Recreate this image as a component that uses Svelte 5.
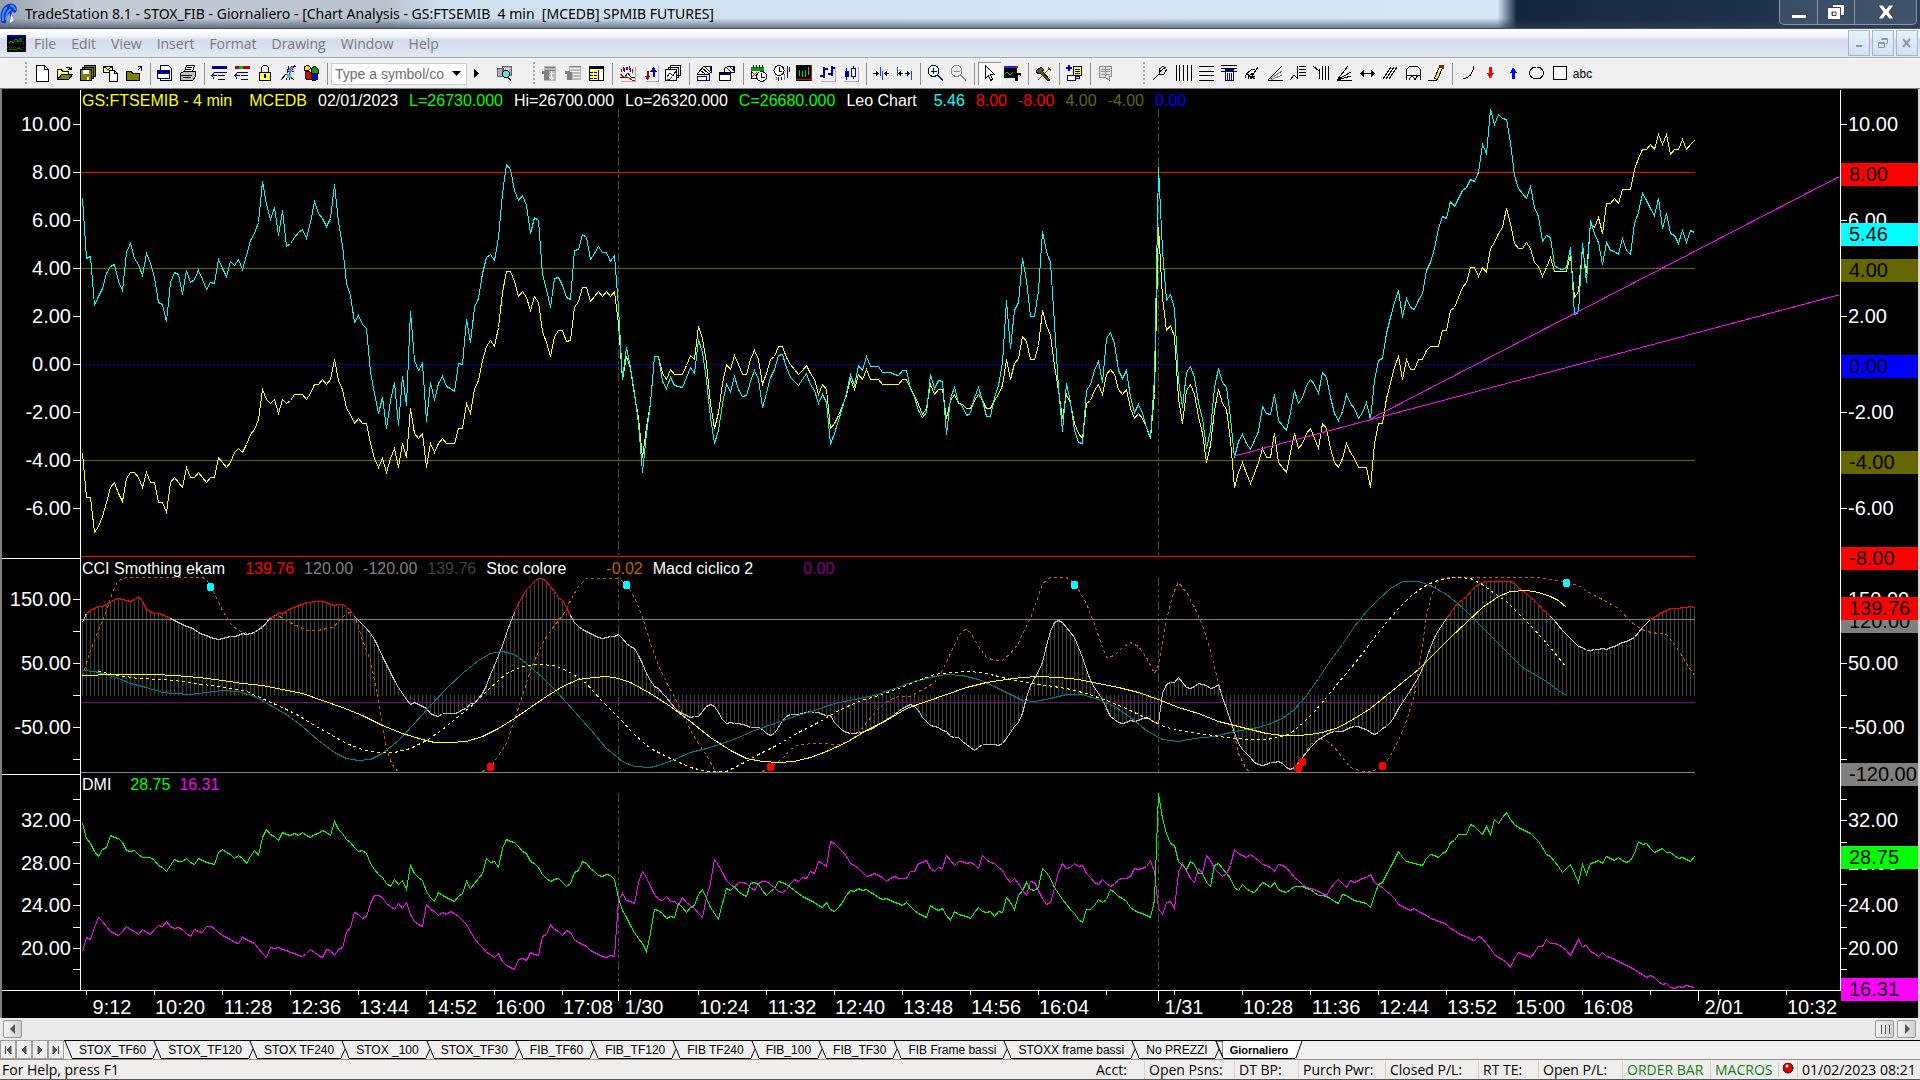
<script lang="ts">
  type Shape = [d: string, fill: string, stroke?: string];

  // one sample per 4 minute bar, stored as panel y
  const nums = (s: string) => s.trim().split(/\s+/).map(Number);

  const leo = nums(`
    108 168 166 215 206 198 183 176 174 191 200 162 153 168 174 185 163 173 187 212
    214 231 192 182 184 204 180 192 189 180 189 199 192 193 169 178 186 171 175 169
    179 165 150 143 132 91 114 129 117 145 120 156 153 147 142 139 148 132 111 123
    128 136 128 94 132 155 193 205 232 225 234 238 282 303 323 307 338 310 292 335
    286 315 221 270 280 273 331 292 310 293 286 296 298 301 273 274 229 252 217 208
    183 167 164 170 147 103 74 79 100 110 105 115 143 127 130 184 199 217 188 187
    195 207 209 160 159 144 147 169 163 156 162 162 171 165 217 289 257 277 303 333
    382 343 313 266 266 291 298 287 295 296 297 287 277 283 249 262 290 327 353 340
    313 294 301 286 299 306 305 291 280 289 317 303 287 279 265 264 277 287 291 295
    289 283 294 300 313 304 312 354 343 330 317 303 284 295 275 280 266 276 276 276
    282 282 282 284 285 280 280 298 307 320 327 322 284 298 290 291 344 308 297 312
    316 325 323 307 297 310 326 326 307 295 272 210 258 220 212 168 190 226 226 200
    141 161 172 233 297 341 293 312 340 352 353 300 294 280 271 292 248 242 253 280
    288 280 307 322 314 323 337 347 287 77 160 210 204 218 290 317 282 276 287 312
    328 358 340 297 278 292 297 327 367 351 344 353 359 350 341 316 323 324 304 330
    335 340 322 300 313 307 295 289 294 303 282 287 307 323 330 321 304 313 318 328
    322 312 329 290 270 268 243 227 212 200 227 208 217 219 210 203 180 172 158 138
    126 128 111 116 108 100 97 89 91 82 54 63 19 34 24 28 29 52 85 98
    103 108 96 117 126 151 145 147 175 178 179 177 157 224 222 153 192 130 143 152
    174 152 160 161 164 148 160 164 133 122 103 110 118 125 108 138 123 143 145 153
    140 152 140 142`);

  const price = nums(`
    363 407 407 442 436 426 412 397 392 403 411 388 382 382 387 397 382 392 392 412
    412 422 392 387 392 397 377 387 387 382 387 392 387 387 367 372 377 372 362 358
    362 354 344 339 329 299 309 313 309 323 309 313 310 304 304 304 309 303 294 294
    289 294 289 269 290 299 318 324 333 328 333 333 353 368 377 368 382 368 358 377
    353 367 318 343 348 343 377 353 362 353 348 353 353 353 338 338 313 323 299 290
    270 256 250 256 237 202 181 181 191 206 201 207 220 206 212 241 252 266 246 240
    240 251 250 217 211 197 197 211 206 201 206 201 206 201 233 289 266 278 305 327
    367 337 312 266 266 283 289 279 284 284 284 275 265 269 236 248 273 313 338 322
    293 274 279 265 274 284 284 269 260 269 294 283 269 266 256 256 267 274 279 284
    280 275 283 289 304 294 299 338 333 325 315 305 289 299 284 289 279 289 289 289
    294 294 294 294 294 289 289 298 305 314 324 318 294 304 299 299 328 310 304 313
    314 318 318 310 304 310 318 318 310 304 295 269 289 273 268 246 251 269 269 255
    220 235 245 275 300 328 304 313 333 343 348 313 310 300 294 304 284 279 284 299
    304 299 318 328 323 328 337 348 303 137 207 240 235 246 308 333 300 294 304 326
    343 372 355 320 299 313 319 350 397 382 372 383 393 383 372 358 367 367 343 372
    377 382 362 343 358 353 343 338 348 358 333 338 358 372 377 368 353 362 368 377
    377 377 397 353 333 333 308 293 277 266 289 269 279 279 269 269 260 256 256 256
    240 240 220 217 207 197 192 177 177 186 177 182 158 152 143 137 118 133 153 158
    158 152 158 172 176 186 177 167 181 181 181 181 165 207 201 158 182 133 137 127
    143 113 113 108 113 99 99 99 79 68 59 59 54 59 44 54 44 64 59 59
    49 59 54 50`);

  const dmiPlus = nums(`
    273 288 293 301 306 299 297 285 287 288 292 300 301 300 304 307 307 307 310 315
    317 321 315 309 311 311 308 312 314 308 310 312 313 314 302 299 302 304 308 305
    308 313 306 300 305 287 279 284 286 290 282 284 285 283 285 282 285 287 284 283
    280 282 285 271 279 283 289 292 297 301 300 303 313 319 324 327 333 336 329 334
    330 339 315 323 327 330 341 347 351 342 345 347 349 351 346 343 331 338 333 328
    323 308 312 311 317 298 289 291 292 296 301 303 311 313 317 324 328 331 329 328
    332 336 333 322 320 311 313 318 321 325 326 324 325 329 348 360 367 375 382 388
    393 401 383 359 360 363 368 366 367 353 357 362 357 355 344 339 348 357 363 369
    353 338 340 336 341 344 346 333 332 334 340 345 341 338 331 332 334 337 340 343
    346 348 350 352 355 357 352 359 361 357 352 345 340 341 338 340 339 342 344 347
    349 348 350 352 353 355 352 356 360 363 365 367 355 358 360 358 365 370 361 364
    365 366 368 362 357 361 362 361 366 361 362 347 352 359 345 340 332 339 340 337
    318 322 328 337 343 349 354 359 363 369 372 359 359 355 349 352 349 339 342 346
    348 351 357 360 362 363 365 367 350 243 268 283 293 295 311 315 319 311 314 323
    323 332 336 315 313 318 323 328 337 340 334 338 341 342 337 332 334 337 332 339
    341 342 339 336 336 336 338 339 342 345 345 346 348 351 353 344 345 348 350 351
    352 353 357 345 334 332 324 317 309 301 307 311 312 313 314 315 308 304 305 307
    303 301 292 290 284 284 284 274 276 280 284 276 284 269 273 267 262 269 274 277
    279 281 283 287 291 297 304 306 311 316 322 318 314 323 332 314 324 313 312 310
    313 306 308 310 307 310 312 310 303 291 294 293 298 302 300 298 302 302 305 308
    307 309 311 306`);

  const dmiMinus = nums(`
    401 387 389 377 367 371 376 381 383 385 381 376 379 381 384 379 382 384 379 375
    376 371 376 378 377 379 383 386 379 381 382 376 376 378 382 385 387 389 392 393
    387 389 391 393 398 403 407 397 398 397 399 400 402 403 405 406 403 399 402 405
    407 399 400 405 399 397 382 377 362 364 368 366 353 345 345 347 353 356 359 353
    358 352 364 371 374 376 354 359 361 365 362 364 361 363 366 370 374 381 388 393
    397 402 404 407 403 411 415 417 419 409 408 410 402 404 405 386 384 374 379 381
    385 380 382 389 392 394 396 400 402 404 406 407 405 406 350 343 350 351 353 332
    321 327 336 344 349 350 346 351 351 355 347 352 355 358 363 367 347 333 309 315
    322 330 334 337 332 332 333 337 340 333 331 331 334 337 341 342 339 333 329 331
    327 328 321 323 311 313 316 291 293 297 301 306 313 315 318 322 326 325 323 325
    327 331 328 326 328 328 328 321 321 313 312 310 318 321 317 318 305 310 315 311
    311 313 312 314 318 305 309 312 313 317 320 327 332 328 333 340 345 331 332 340
    348 354 352 338 322 313 318 317 313 316 315 323 327 332 334 329 333 336 334 329
    328 328 326 318 319 318 316 310 321 358 364 352 351 358 322 313 320 328 332 318
    323 305 310 318 322 326 323 315 299 303 305 307 304 307 310 314 315 317 321 314
    315 317 322 327 330 334 337 338 339 341 343 345 338 333 329 333 337 330 332 330
    328 327 324 332 335 337 341 344 348 354 356 358 360 358 361 363 365 368 369 371
    372 374 378 380 383 385 386 389 390 386 388 393 398 404 407 409 412 417 408 402
    404 405 407 402 396 396 389 393 393 394 397 400 405 397 389 396 395 401 403 406
    402 406 407 409 411 413 415 417 419 422 424 427 425 427 431 434 433 437 438 436
    437 435 436 437`);

  const cci = nums(`
    72 63 60 58 56 56 54 52 49 48 49 50 51 49 46 51 59 61 63 63
    64 66 68 70 72 74 76 77 79 82 84 85 87 88 89 88 87 86 86 85
    83 84 83 82 79 77 72 67 66 62 63 61 58 57 55 54 52 52 51 51
    51 52 54 55 54 54 57 60 66 70 74 78 83 89 97 106 114 122 130 137
    143 149 154 152 154 156 158 163 165 166 163 163 163 163 162 159 158 153 153 148
    143 135 124 115 105 95 83 72 62 53 46 39 35 31 28 28 31 36 41 47
    50 57 65 72 76 79 81 83 85 87 88 87 86 86 84 88 93 96 98 105
    113 123 130 136 138 143 147 152 157 161 163 165 167 166 166 161 156 154 156 162
    169 173 172 173 173 174 175 177 177 177 179 183 185 183 177 170 166 164 164 164
    163 162 161 162 162 164 165 165 172 176 180 182 183 183 182 182 180 179 177 174
    172 169 167 164 161 158 156 154 156 160 167 171 175 176 177 180 181 186 187 187
    191 194 197 200 197 194 194 194 194 195 193 188 182 176 172 163 147 135 128 121
    112 95 81 72 70 72 77 82 87 97 107 119 130 137 143 149 158 166 169 172
    173 172 170 171 170 168 167 169 172 173 143 134 132 132 127 132 137 138 136 133
    134 135 138 137 134 147 158 170 182 193 199 203 207 212 214 215 214 212 212 211
    213 217 219 217 212 207 202 197 193 189 187 184 182 181 181 181 179 177 176 176
    178 179 182 184 182 178 176 172 166 158 152 146 140 133 127 118 108 97 87 80
    74 68 63 57 52 49 46 41 37 34 32 31 31 31 31 31 31 31 33 37
    40 43 47 50 54 59 62 66 70 75 80 84 88 92 96 97 100 100 99 99
    98 99 97 96 94 92 91 89 87 82 77 73 69 67 64 62 60 58 58 58
    57 57 56 57`);

  // smoothed curves as bar,y knots
  const macdSlow = `0,125 8,124 18,124 23,125 29,127 35,130 40,133 45,135 50,139 55,143 60,150 65,157 70,165 75,175
    80,183 85,189 88,192 92,192 96,191 100,186 104,178 108,168 112,157 116,146 120,136 124,129 128,127 131,126 134,128
    137,132 142,143 147,156 152,171 157,187 162,200 166,208 170,211 174,212 178,211 182,207 186,201 191,192 196,180
    201,170 206,158 211,151 216,144 221,137 226,132 231,129 235,127 239,126 244,127 249,129 254,133 259,137 264,142
    269,149 274,157 279,163 284,171 289,176 293,180 296,183 300,185 304,185 307,184 310,182 314,177 318,168 322,158
    326,145 330,132 334,119 338,103 342,87 346,72 350,57 354,46 357,41 361,40 364,42 367,46 369,50 371,57`;

  const macdFast = `0,120 3,121 6,124 9,128 12,133 16,137 20,142 23,143 27,144 31,142 35,140 39,141 43,146 47,155 51,164
    55,176 59,190 63,202 66,208 69,210 72,209 75,203 79,190 83,173 87,155 91,138 95,123 99,110 102,103 105,101 108,104
    111,113 115,127 119,143 123,161 127,179 131,198 135,211 138,216 142,217 144,215 148,209 152,202 156,198 160,193
    164,187 168,180 173,173 178,166 183,160 188,153 193,149 198,145 203,138 208,131 213,126 216,124 220,125 224,129
    228,136 232,144 235,150 238,151 242,148 246,144 250,144 254,149 258,156 262,167 266,180 270,189 274,191 278,188
    283,186 287,182 291,179 294,177 297,173 300,168 303,159 306,145 309,128 312,110 315,94 318,76 321,61 324,49 327,38
    330,31 334,31 337,35 341,44 345,57 349,73 353,89 357,105 360,117 363,124 366,131 369,140 371,145`;

  const macdSignal = `4,121 9,125 14,128 20,129 25,131 30,134 36,137 41,141 46,150 50,157 54,165 58,175 62,184 66,193
    70,199 74,202 78,202 82,198 86,190 90,179 94,166 98,153 102,137 106,123 110,116 114,114 118,115 122,122 126,133
    130,151 134,167 138,184 142,198 147,208 152,217 156,221 161,221 165,213 169,204 174,194 179,182 184,172 189,160
    194,151 199,145 204,138 209,130 213,124 217,122 222,121 226,123 231,128 236,132 241,135 246,138 251,143 256,150
    261,158 266,168 271,177 276,181 281,184 286,187 291,189 296,189 299,187 302,183 305,173 308,161 311,147 314,132
    317,118 320,103 323,87 326,72 329,58 332,46 335,37 338,31 341,28 344,27 347,28 350,34 353,43 356,51 359,63 362,75
    365,88 368,102 371,117`;

  const stoc = [
    `0,125 2,100 4,80 6,60 7,48 8,37 9,30 11,27 30,27 31,29 33,43 35,60 37,73 39,80 42,84 44,79 46,72 48,65 50,67 52,72
    54,76 56,80 59,80 61,78 63,76 64,71 66,63 67,62 68,66 69,76 70,90 72,110 73,130 74,150 75,175 76,197 77,210 78,218 79,221`,
    `100,221 102,217 104,205 106,193 108,169 110,145 112,120 114,101 116,86 118,75 120,65 122,50 124,36 126,28 134,28
    136,34 138,47 140,67 142,93 144,115 146,132 148,146 150,163 152,180 154,193 156,205 158,219 159,221`,
    `170,221 172,217 175,208 177,199 179,194 184,193 189,194 192,190 194,183 196,172 199,158 202,149 204,146 207,146
    209,141 211,137 213,132 215,120 217,103 219,86 220,80 221,79 222,82 224,96 226,107 228,110 230,110 232,103 234,93
    235,83 237,68 239,45 240,34 241,29 242,27 246,27 247,29 249,39 251,53 253,74 255,97 256,107 258,105 260,97 262,92
    264,96 266,107 268,123 269,115 270,92 271,70 272,53 273,40 274,32 276,42 278,57 280,75 282,100 284,133 286,158
    288,185 289,203 291,219 292,221`,
    `303,220 304,213 306,200 307,194 309,189 311,190 313,197 315,207 317,217 320,221 322,221 325,217 327,205 329,190
    331,170 333,145 334,120 335,95 336,65 337,48 338,38 339,31 340,28 341,27 364,27 367,29 370,31 374,35 377,43 380,49
    384,58 387,71 389,77 391,81 394,83 396,84 398,94 400,106 402,119 403,125`
  ];

  const PLOT_W = 1759;
  const bx = (bar: number) => bar * 4 + 1.5;
  const LAST = bx(403);
  const line = (ys: number[]) => ys.map((y, i) => `${bx(i)},${y + 0.5}`).join(' ');
  const knots = (s: string) =>
    s.trim().split(/\s+/).map((p) => {
      const [b, y] = p.split(',').map(Number);
      return `${bx(b)},${y + 0.5}`;
    }).join(' ');

  const OVERBOUGHT = 69;
  const cciPath = (hot: boolean) =>
    cci.slice(1).map((y, i) => {
      const isHot = y < OVERBOUGHT && cci[i] < OVERBOUGHT + 3;
      return isHot === hot ? `M${bx(i)} ${cci[i] + 0.5}L${bx(i + 1)} ${y + 0.5}` : '';
    }).join('');
  const cciBars = cci.map((y, i) => `M${bx(i)} ${y > 145 ? 145 : 146}V${y}`).join('');

  const dots: [number, number, string][] = [
    [32, 37, '#0ff'], [136, 35, '#0ff'], [248, 35, '#0ff'], [371, 33, '#0ff'],
    [102, 217, '#f00'], [172, 217, '#f00'], [304, 218, '#f00'], [305, 212, '#f00'], [325, 216, '#f00']
  ];

  const ticks: [number, string][] = [
    [34, '10.00'], [82, '8.00'], [130, '6.00'], [178, '4.00'], [226, '2.00'], [274, '0.00'],
    [322, '-2.00'], [370, '-4.00'], [418, '-6.00'],
    [509, '150.00'], [541, ''], [573, '50.00'], [605, ''], [637, '-50.00'], [669, ''],
    [709, ''], [730, '32.00'], [752, ''], [773, '28.00'], [794, ''], [815, '24.00'], [837, ''], [858, '20.00'], [879, '']
  ];

  const tags: [number, string, string][] = [
    [73, '8.00', '#f00'], [133, '5.46', '#0ff'], [169, '4.00', '#660'], [265, '0.00', '#00f'],
    [361, '-4.00', '#660'], [457, '-8.00', '#f00'], [520, '120.00', '#808080'], [507, '139.76', '#f00'],
    [673, '-120.00', '#808080'], [756, '28.75', '#0f0'], [888, '16.31', '#f0f']
  ];

  const pct = (x: number) => `${(x / PLOT_W) * 100}%`;
  const times: [number, string, boolean?][] = [
    [5, '9:12'], [73, '10:20'], [141, '11:28'], [209, '12:36'], [277, '13:44'], [345, '14:52'], [413, '16:00'],
    [481, '17:08'], [537, '1/30', true], [549, ''], [617, '10:24'], [685, '11:32'], [753, '12:40'], [821, '13:48'],
    [889, '14:56'], [957, '16:04'], [1025, ''], [1077, '1/31', true], [1093, ''], [1161, '10:28'], [1229, '11:36'],
    [1297, '12:44'], [1365, '13:52'], [1433, '15:00'], [1501, '16:08'], [1569, ''], [1617, '2/01', true], [1637, ''],
    [1705, '10:32']
  ];

  const K = '#000';
  const N = '#000080';
  const G = '#808080';
  const icons: Record<string, Shape[]> = {
    'New': [['M2.500.5h8l4 4v12h-12z', '#fff', K], ['M10.500 .5v4h4', 'none', K]],
    'Open': [['M.5 14.500v-10h4l1 2h6v3', '#ffff80', K], ['M.5 14.500l4-5h11l-4 5z', '#808000', K], ['M9 2.500h3l2 2m0-3v3h-3', 'none', K]],
    'Save all': [['M4.500.5h11v11h-11zM2.500 2.500h11v11h-11z', '#808000', K], ['M.5 4.500h11v11H.5z', '#808000', K], ['M3 5h6v4H3zM7 12h2v3H7z', '#fff']],
    'Send': [['M.5 1.500h9v6h-9z', '#ffff80', K], ['M.5 1.500l4.500 3 4.500-3', 'none', K], ['M6.500 5.500h5l3 3v8h-8z', '#fff', K], ['M11.500 5.500v3h3', 'none', K]],
    'Close folder': [['M.5 15.500v-9h5l1 2h7v7z', '#808000', K], ['M12 1.500h3.500v4M15.500 1.500l-4 4', 'none', N]],
    'Window': [['M3.500.5h8l3 3v12h-11z', '#fff', K], ['M.5 5.500h12v8H.5z', '#fff', N], ['M1 6h12v3H1z', N]],
    'Print': [['M4.500 6.500l2-6h8l-2 6z', '#fff', K], ['M.5 8.500l3-2h12v5l-3 4H.5z', '#c0c0c0', K], ['M7 2.500h5M6 4.500h5M1 10.500h11M3 12.500h8', 'none', K]],
    'Study': [['M1 1h15v3H1z', N], ['M6.500 7.500h9m-9 3h7m-7 4h7', 'none', K], ['M14 7.500H5Q2 7.500 2 10.500h4m-3-2l-2 2 2 3', 'none', N]],
    'Strategy': [['M1 1h15v3H1z', '#c00000'], ['M5 1h4v3H5z', '#00c000'], ['M6.500 10.500h7m-7 4h7', 'none', K], ['M14 7.500H5Q2 7.500 2 10.500h4m-3-2l-2 2 2 3', 'none', N]],
    'Lock': [['M4.500 7v-3q0-3.500 3.500-3.500t3.500 3.500v3', 'none', K], ['M2.500 7.500h11v8h-11z', '#ffff60', K], ['M7 9h2v4H7z', K]],
    'Satellite': [['M7 8l2-7m0 8l6-9M8 6l6 1M11 2l5-1', 'none', N], ['M9 3l4-2-1 6-3 1z', '#8080c0'], ['M1 15l5-6 2 2-2 4M10 15l-1-4 5 4', 'none', K], ['M7 9h4v4H7z', '#40c0c0']],
    'Blocks': [['M1 2l4-2 3 3-3 3-4-1z', '#ffe000', K], ['M8 4l4-3 3 3v4H9z', '#00a000', K], ['M2 7l4-1 3 3v5l-4 1-3-2z', '#e00000', K], ['M9 8h5l1 6-4 2-3-2z', '#0000c0', K]],
    'Look up': [['M1 3h6v8H1zM6 1h9v9H6z', '#b0b0b8', '#606070'], ['M8 3v4m2-4v4m2-4v4', 'none', '#fff'], ['M10 5.500a3.500 3.500 0 1 0 .1 0zM12 12l3 4', '#60e0e0', K]],
    'Off chart': [['M2 1h12v15H2z', '#b8b8b8'], ['M0 6h7v9H2V9H0z', G], ['M3 2.500h10M3 5.500h10', 'none', G], ['M9.500 6v8m-2-2l2 2 2-2m-4-4h4', 'none', '#fff']],
    'Off table': [['M4 1h12v14H4z', '#b8b8b8'], ['M0 6h7v9H2V9H0z', G], ['M5 3.500h10M5 6.500h10M8 9.500h7M8 12.500h7', 'none', '#fff'], ['M4 1.500h12', 'none', G]],
    'Table': [['M1.500 1.500h14v14h-14z', '#fff', K], ['M1 1h15v3H1z', K], ['M2 5h8v10H2z', '#ffff60'], ['M2 7.500h3m1 0h3m-7 3h3m1 0h3m-7 3h3m1 0h3M10.500 5v10', 'none', K]],
    'Studies': [['M16.500 2v14.500H2', 'none', '#b0b0b0'], ['M2.500 4v3m2-5v4m3-4v3m3-4v4m3-1v4', 'none', '#d00000'], ['M5.500 3v4m3-5v3m3-2v4', 'none', '#0000c0'], ['M1 13l5-1 3-4 3 4 4 1', 'none', K], ['M1 9l4 3 4 0 4 3 3 1', 'none', '#d00000']],
    'Arrows': [['M16.500 1v15H4', 'none', '#b0b0b0'], ['M5 6h1v5h2l-2.500 3L3 11h2z', '#a00000', '#a00000'], ['M11 11h1V6h2l-2.500-3L9 6h2z', '#0000a0', '#0000a0']],
    'Charts': [['M5.500.5h10v10h-10zM3.500 2.500h10v10h-10z', '#fff', K], ['M.5 4.500h11v11H.5z', '#fff', K], ['M2 12l3-4 3 3 3-5', 'none', '#0000c0'], ['M2 14h3l2-2', 'none', '#c00000']],
    'Format a': [['M1.500 8.500l6-7h8v6l-5 2h-9z', '#fff', K], ['M4 5l5 4M6 3l6 5M8 1l6 6', 'none', K], ['M14 1h2v5h-2z', N], ['M1.500 11.500h9v4h-9zM8.500 9.500h5v6h-3', '#fff', N]],
    'Format b': [['M5.500 7.500v-4l3-2h7v6h-5z', '#fff', K], ['M8 3l4 4M10 1l5 5', 'none', K], ['M14 1h2v4h-2z', N], ['M.5 7.500h11v8H.5z', '#fff', K], ['M1 8h10v2H1z', N]],
    'Calendar': [['M1.500 2.500h12v11h-12z', '#fff', K], ['M1 2h13v4H1z', '#00a000'], ['M3.500 0v3m3-3v3m3-3v3m3-3v3', 'none', K], ['M2 7l5 5m0-5l-5 5', 'none', '#e00000'], ['M11.500 6.500a5 5 0 1 0 .1 0z', '#fff', K], ['M11.500 8v4h3', 'none', K]],
    'Clock bars': [['M6 .5a5 5 0 1 0 .1 0z', '#fff', K], ['M6 2v4l3 1', 'none', K], ['M5.500 12v4m3-4v3m6-14v12m2-11v5', 'none', '#0000a0'], ['M3.500 12v3m8-6v6', 'none', G]],
    'Black chart': [['M0 0h16v16H0z', K], ['M3.500 5v6m3-5v6m3-7v7m3-10v8', 'none', '#00e000'], ['M0 14.500h16M15.500 0v16', 'none', '#e00000']],
    'Bar type': [['M16.500 2v14.500H2', 'none', '#b0b0b0'], ['M4 2h2v11H4zM1 10h3v2H1zM6 3h3v2H6zM12 1h2v10h-2zM9 8h3v2H9zM14 2h2v2h-2z', '#0000a0']],
    'Candles': [['M16.500 2v14.500H2', 'none', '#b0b0b0'], ['M4.500 3v12M11.500 1v13', 'none', '#0000a0'], ['M3 6h4v6H3z', '#0000a0'], ['M9.500 3.500h4v8h-4z', '#fff', '#0000a0']],
    'Squeeze': [['M0 8.500h5m-2-2l2 2-2 2M16 8.500h-4m2-2l-2 2 2 2', 'none', K], ['M7.500 2v9M9.500 6v9', 'none', '#2040ff']],
    'Widen': [['M3 8.500h4m-2-2l-2 2 2 2M13 8.500H9m2-2l2 2-2 2', 'none', K], ['M1.500 2v9M15.500 6v9', 'none', '#2040ff']],
    'Zoom in': [['M10 10l6 6M11 10l5 5', 'none', N], ['M6.500 .5a5.500 5.500 0 1 0 .1 0z', '#d8ffff', K], ['M6 3h1v6H6zM3.500 5.500h6v1h-6z', K]],
    'Zoom out': [['M10 10l6 6M11 10l5 5', 'none', '#909090'], ['M6.500 .5a5.500 5.500 0 1 0 .1 0z', '#eee', '#909090'], ['M3.500 6.500h6', 'none', '#909090']],
    'Pointer': [['M4.500.5v13l3-3 2 5 2-1-2-5h4z', '#fff', K]],
    'Text on chart': [['M0 1h13v12H0z', K], ['M0 1h12v2H0z', '#2020ff'], ['M11 1h3v2h-3z', '#e00000'], ['M1 9l2-2 3 3 3-3', 'none', '#00e000'], ['M8 8h9v3h-1v-1h-2v6h-3v-6H9v1H8z', K]],
    'Tools': [['M3 15L14 4M13 2l3 4', 'none', '#806000'], ['M1 6l5-4 3 3-2 1 8 9-2 1-8-8-2 1z', '#606000', K]],
    'Add sheet': [['M2 0h2v2h2v2H4v2H2V4H0V2h2z', '#0000d0'], ['M7.500 1.500h8v9h-8z', '#ffff60', K], ['M9 4.500h5M9 6.500h5M9 8.500h5', 'none', K], ['M1.500 10.500h8v5h-8zM9.500 11.500h4v2h-4', '#fff', N]],
    'Note': [['M2.500 1.500h12v10h-2v4l-4-3h-6z', '#e0e0e0', '#909090'], ['M4 4.500h9M4 6.500h9M4 9.500h9M8.500 2v10', 'none', '#909090']],
    'Pitchfork': [['M1 15L7 9V4l5-3M7 9h5l3-5M7 7l7-5', 'none', K]],
    'Time zones': [['M1.500 0v16M4.500 0v16M8.500 0v16M12.500 0v16M16.500 0v16', 'none', K]],
    'Levels': [['M1 1.500h15M1 6.500h15M1 10.500h15M1 15.500h15', 'none', K]],
    'Calculator': [['M0 .5h16M0 3.500h16M0 6.500h16', 'none', K], ['M4.500 4.500h8v11h-8z', '#fff', '#0000a0'], ['M5 5h7v2H5z', '#0000a0'], ['M6.500 8v7m2-7v7m2-7v7', 'none', '#0000a0']],
    'Arcs': [['M1 13q2-8 10-9M4 14q1-5 6-6M7 14q1-3 4-3M3 9l8 5M14 2L6 14', 'none', K]],
    'Fan': [['M1 15.500h15M1 15L15 1', 'none', K], ['M3 14L15 6M4 15L15 10', 'none', G]],
    'Retrace': [['M0 15l4-5 3 3V1', 'none', K], ['M9 1.500h7M9 4.500h7M9 7.500h7M9 10.500h7', 'none', K]],
    'Extensions': [['M0 1l6 5M6.500 4v10M9.500 1v14M12.500 1v14M15.500 1v14', 'none', K]],
    'Speed lines': [['M1 15.500h15M1 15L12 1M1 15L15 7M1 15L15 11', 'none', K]],
    'Horizontal': [['M2 8h13', 'none', K], ['M5 4v9L1 8.500zM12 4v9l4-4.500z', K]],
    'Parallel': [['M1 14L9 2M4 14L12 2M7 14L15 2', 'none', K]],
    'Cycle': [['M1.500 15V7q0-6 7-6t7 6v8M1 11l3-1 3 1 3-1 3 1 3-1M4 15l3-5 3 5 3-5', 'none', K]],
    'Highlight': [['M6.500 13.500L11.500 1.500l3 1-5 12z', '#ffff40', K], ['M11 0h5v4l-4-1z', '#802020'], ['M0 15.500h9', 'none', K]],
    'Curve': [['M15 1q-2 12-11 13', 'none', K]],
    'Down arrow': [['M7 2h3v6h2l-4 6-3-6h2z', '#f00']],
    'Up arrow': [['M7 14h3V8h2L8 2 5 8h2z', '#00f']],
    'Ellipse': [['M8.500 2a7 6 0 1 0 .1 0z', 'none', K]],
    'Rectangle': [['M2.500 1.500h13v13h-13z', '#fff', K]]
  };

  const fileTools = ['New', 'Open', 'Save all', 'Send', 'Close folder', '|', 'Window', 'Print', '|', 'Study', 'Strategy', 'Lock', 'Satellite', 'Blocks', '|'];
  const chartTools = [
    'Off chart', 'Off table', 'Table', '|', 'Studies', 'Arrows', 'Charts', '|', 'Format a', 'Format b', '|',
    'Calendar', 'Clock bars', 'Black chart', 'Bar type', 'Candles', '|', 'Squeeze', 'Widen', '|', 'Zoom in', 'Zoom out', '|',
    'Pointer', 'Text on chart', '|', 'Tools', '|', 'Add sheet', '|', 'Note'
  ];
  const drawTools = [
    'Pitchfork', 'Time zones', 'Levels', 'Calculator', 'Arcs', 'Fan', 'Retrace', 'Extensions', 'Speed lines', 'Horizontal',
    'Parallel', 'Cycle', 'Highlight', '|', 'Curve', 'Down arrow', 'Up arrow', 'Ellipse', 'Rectangle'
  ];

  const menus = ['File', 'Edit', 'View', 'Insert', 'Format', 'Drawing', 'Window', 'Help'];
  const sheets = [
    'STOX_TF60', 'STOX_TF120', 'STOX TF240', 'STOX _100', 'STOX_TF30', 'FIB_TF60', 'FIB_TF120', 'FIB TF240',
    'FIB_100', 'FIB_TF30', 'FIB Frame bassi', 'STOXX frame bassi', 'No PREZZI', 'Giornaliero'
  ];
  let active = $state('Giornaliero');
  let symbol = $state('');
</script>

{#snippet icon(name: string)}
  <svg class="icon" width="17" height="17" viewBox="0 0 17 17" aria-hidden="true">
    {#each icons[name] as [d, fill, stroke]}
      <path {d} {fill} stroke={stroke ?? 'none'} />
    {/each}
  </svg>
{/snippet}

{#snippet tools(list: string[])}
  {#each list as name}
    {#if name === '|'}
      <span class="sep"></span>
    {:else}
      <button class="tool" class:pressed={name === 'Pointer'} title={name} aria-label={name}>{@render icon(name)}</button>
    {/if}
  {/each}
{/snippet}

<div class="app">
  <header class="titlebar">
    <svg class="logo" width="18" height="22" viewBox="0 0 18 22" aria-hidden="true">
      <path d="M1 19Q-1 7 6 2q5-3 9 0 3 3 1 7-2 2-4-1-1 3 1 5v6q-4-2-3-9-4 3-4 10-2 1-5-1z" fill="#1030d8" />
      <path d="M3 18Q2 8 7 4M6 17q0-8 5-11M10 3q4-1 5 4" fill="none" stroke="#30a0ff" stroke-width="2" />
      <path d="M11 11q3 3 2 7l-3 2z" fill="#fff" />
    </svg>
    <h1>TradeStation 8.1 - STOX_FIB - Giornaliero - [Chart Analysis - GS:FTSEMIB&nbsp; 4 min&nbsp; [MCEDB] SPMIB FUTURES]</h1>
    <div class="winbtns">
      <button aria-label="Minimize"><svg width="18" height="18" viewBox="0 0 18 18"><path d="M1.500 11.500h15v4h-15z" fill="#fff" stroke="#445" /></svg></button>
      <button aria-label="Restore"><svg width="20" height="18" viewBox="0 0 20 18"><path d="M6.500 1.500h12v11h-12z" fill="#fff" stroke="#445" /><path d="M1.500 4.500h13v12h-13zM6 9v3.500h4V9z" fill="#fff" stroke="#445" fill-rule="evenodd" /></svg></button>
      <button class="close" aria-label="Close"><svg width="18" height="16" viewBox="0 0 18 16"><path d="M1 1h5l3 4 3-4h5l-5 7 5 7h-5l-3-4-3 4H1l5-7z" fill="#fff" stroke="#445" /></svg></button>
    </div>
  </header>

  <nav class="menubar">
    <svg class="doc" width="19" height="17" viewBox="0 0 19 17" aria-hidden="true">
      <path d="M0 0h19v17H0z" fill="#000" />
      <path d="M0 0h19v2H0z" fill="#0000c0" />
      <path d="M2 9l2-3 2 2 3-4 2 3 3-4v4" fill="none" stroke="#00c000" />
      <path d="M0 12.500h19M16.500 2v15" stroke="#a00000" stroke-dasharray="1 1" />
      <path d="M2 15l3-1 3 1 4-2 3 2" fill="none" stroke="#00a000" />
    </svg>
    {#each menus as m}
      <button>{m}</button>
    {/each}
    <div class="mdi">
      <button aria-label="Minimize chart"><svg width="12" height="12" viewBox="0 0 12 12"><path d="M3 8h6v2H3z" fill="#8a9ab0" /></svg></button>
      <button aria-label="Restore chart"><svg width="12" height="12" viewBox="0 0 12 12"><path d="M4.500 1.500h6v5h-2M1.500 5.500h6v5h-6zM4 2.500h7M1 6.500h7" fill="none" stroke="#8a9ab0" /></svg></button>
      <button aria-label="Close chart"><svg width="12" height="12" viewBox="0 0 12 12"><path d="M2 2l7 8M9 2l-7 8" fill="none" stroke="#8a9ab0" stroke-width="2" /></svg></button>
    </div>
  </nav>

  <div class="toolbar">
    <div class="group first">
      <span class="grip"></span>
      {@render tools(fileTools)}
      <div class="combo">
        <input type="text" aria-label="Symbol" placeholder="Type a symbol/co" bind:value={symbol} />
        <button aria-label="Recent symbols"><svg width="9" height="5" viewBox="0 0 9 5"><path d="M0 0h9L4.500 5z" /></svg></button>
      </div>
      <button class="go" aria-label="Go"><svg width="5" height="9" viewBox="0 0 5 9"><path d="M0 0l5 4.500L0 9z" /></svg></button>
      <button class="tool lookup" aria-label="Look up">{@render icon('Look up')}</button>
    </div>
    <div class="group second">
      <span class="grip"></span>
      {@render tools(chartTools)}
    </div>
    <div class="group third">
      <span class="grip"></span>
      {@render tools(drawTools)}
      <button class="tool abc">abc</button>
    </div>
  </div>

  <main class="chart">
    <svg class="axis left" width="79" height="901" aria-hidden="true">
      {#each ticks as [y, label]}
        <path d="M71 {y}.5h8" stroke="#fff" />
        {#if label}<text x="69" y={y + 7} text-anchor="end">{label}</text>{/if}
      {/each}
      <path d="M0 468.500h79M0 684.500h79M0 900.500h79M78.500 0v901" stroke="#fff" />
    </svg>

    <div class="plots">
      <svg class="plot" viewBox="0 0 {PLOT_W} 901" preserveAspectRatio="none" role="img" aria-label="GS:FTSEMIB 4 minute chart">
        <g fill="none">
          <path d="M0 82.500H{LAST}M0 466.500H{LAST}" stroke="#f00" />
          <path d="M0 178.500H{LAST}M0 370.500H{LAST}" stroke="#660" />
          <path d="M0 274.500H{LAST}" stroke="#00f" stroke-dasharray="2 2" />
          {#each [bx(134), bx(269)] as x}
            <path d="M{x} 19V465M{x} 487V682M{x} 703V897" stroke="#484848" stroke-dasharray="9 3 3 3 3 3" />
          {/each}
          <polyline points={line(price)} stroke="#ff0" />
          <polyline points={line(leo)} stroke="#0ff" />
          <path d="M{bx(322)} 329L{bx(439)} 87M{bx(288)} 366L{bx(439)} 205" stroke="#f0f" />
        </g>
        <g fill="none" transform="translate(0 460)">
          <path d={cciBars} stroke="#404040" />
          <path d="M0 69.500H{LAST}M0 222.500H{LAST}" stroke="#808080" />
          <path d="M0 152.500H{LAST}" stroke="#800080" />
          {#each stoc as s}
            <polyline points={knots(s)} stroke="#c06000" stroke-dasharray="3 3" />
          {/each}
          <path d={cciPath(false)} stroke="#c0c0c0" />
          <path d={cciPath(true)} stroke="#f00" />
          <polyline points={knots(macdFast)} stroke="#008080" />
          <polyline points={knots(macdSignal)} stroke="#ff0" stroke-dasharray="3 3" />
          <polyline points={knots(macdSlow)} stroke="#ff0" />
          {#each dots as [b, y, color]}
            <circle cx={bx(b)} cy={y} r="4" fill={color} />
          {/each}
          <polyline points={line(dmiMinus)} stroke="#f0f" />
          <polyline points={line(dmiPlus)} stroke="#0f0" />
        </g>
        <path d="M0 900.500H{PLOT_W}" stroke="#fff" />
      </svg>

      <div class="legend price">
        <span class="yellow">GS:FTSEMIB - 4 min</span><span class="yellow near">MCEDB</span><span>02/01/2023</span>
        <span class="lime">L=26730.000</span><span>Hi=26700.000</span><span>Lo=26320.000</span>
        <span class="lime">C=26680.000</span><span>Leo Chart</span><span class="cyan near">5.46</span>
        <span class="red">8.00</span><span class="red">-8.00</span><span class="olive">4.00</span>
        <span class="olive">-4.00</span><span class="blue">0.00</span>
      </div>
      <div class="legend cci">
        <span>CCI Smothing ekam</span><span class="red apart">139.76</span><span class="gray">120.00</span>
        <span class="gray">-120.00</span><span class="dim">139.76</span><span>Stoc colore</span>
        <span class="orange far">-0.02</span><span>Macd ciclico 2</span><span class="purple farther">0.00</span>
      </div>
      <div class="legend dmi">
        <span>DMI</span><span class="lime apart">28.75</span><span class="magenta">16.31</span>
      </div>
    </div>

    <svg class="axis right" width="78" height="928" aria-hidden="true">
      <path d="M.5 0v901" stroke="#fff" />
      {#each ticks as [y, label]}
        <path d="M0 {y}.5h7" stroke="#fff" />
        {#if label}<text x="8" y={y + 7}>{label}</text>{/if}
      {/each}
      {#each tags as [y, label, color]}
        <rect x="1" {y} width="77" height="23" fill={color} />
        <text class="tag" x="9" y={y + 18}>{label}</text>
      {/each}
    </svg>

    <svg class="times" width="100%" height="27" aria-hidden="true">
      {#each times as [x, label, day]}
        <rect x={pct(x)} y="0" width="1" height={day ? 10 : 4} fill="#fff" />
        {#if label}<text x={pct(x + 26)} y="23" text-anchor="middle">{label}</text>{/if}
      {/each}
    </svg>
  </main>

  <div class="scroll">
    <button aria-label="Scroll left"><svg width="6" height="10" viewBox="0 0 6 10"><path d="M5 0v10L0 5z" fill="#555" /></svg></button>
    <span class="track"></span>
    <button class="thumb" aria-label="Scroll thumb"><svg width="10" height="9" viewBox="0 0 10 9"><path d="M1.500 0v9M5.500 0v9M9.500 0v9" stroke="#555" /></svg></button>
    <button aria-label="Scroll right"><svg width="6" height="10" viewBox="0 0 6 10"><path d="M1 0v10l5-5z" fill="#555" /></svg></button>
  </div>

  <div class="sheets">
    {#each ['M2.500 1v8M8 1v8L4 5z', 'M7 1v8L3 5z', 'M3 1v8l4-4z', 'M7.500 1v8M2 1v8l4-4z'] as d, i}
      <button class="nav" aria-label={['First', 'Previous', 'Next', 'Last'][i]}><svg width="10" height="10" viewBox="0 0 10 10"><path {d} fill="#555" stroke="#555" stroke-width="1" /></svg></button>
    {/each}
    <div class="tabs" role="tablist">
      {#each sheets as s, i}
        <svg class="slant" class:on={s === active} width="8" height="18" viewBox="0 0 8 18" aria-hidden="true">
          {#if s === active}<path d="M1 0L8 17V0z" fill="#fff" />{/if}
          <path d="M1 0L8 17" />
          {#if i > 0}<path d="M0 17L4 8" />{/if}
        </svg>
        <button role="tab" aria-selected={s === active} class:active={s === active} onclick={() => (active = s)}>{s}</button>
      {/each}
      <svg class="slant" width="8" height="18" viewBox="0 0 8 18" aria-hidden="true">
        <path d="M0 0h8L1 17H0z" fill="#fff" stroke="none" /><path d="M1 17L7 0" />
      </svg>
      <span class="rest"></span>
    </div>
  </div>

  <footer class="status">
    <span class="help">For Help, press F1</span>
    <span class="cell w48">Acct:</span>
    <span class="cell w90">Open Psns:</span>
    <span class="cell w64">DT BP:</span>
    <span class="cell w86">Purch Pwr:</span>
    <span class="cell w93">Closed P/L:</span>
    <span class="cell w60">RT TE:</span>
    <span class="cell w83">Open P/L:</span>
    <span class="cell w88 on">ORDER BAR</span>
    <span class="cell w68 on">MACROS</span>
    <span class="cell w19"><svg width="11" height="14" viewBox="0 0 11 14" aria-hidden="true"><circle cx="5" cy="5" r="5" fill="#e00000" stroke="#400" /><circle cx="4" cy="3" r="1.500" fill="#fff" /></svg></span>
    <span class="cell w123">01/02/2023 08:21</span>
  </footer>
</div>

<style>
  :global(body) {
    background: #d8e0ec;
  }
  .app {
    font-family: "Open Sans", "Noto Sans", sans-serif;
    font-size: 14px;
    color: #000;
    background: #f0f0f0;
    overflow: hidden;
  }
  button {
    font: inherit;
    color: inherit;
    background: none;
    border: 0;
    padding: 0;
    display: flex;
    align-items: center;
    justify-content: center;
  }
  svg {
    display: block;
    flex: none;
  }

  .titlebar {
    display: flex;
    align-items: center;
    height: 29px;
    box-sizing: border-box;
    padding-right: 3px;
    border-bottom: 1px solid #46525f;
    background:
      linear-gradient(180deg, transparent 65%, rgba(50, 65, 85, 0.65)),
      linear-gradient(90deg, #98a2ae, #c4cdd6 4%, #b8c2cc 20%, #cfe0f0 23%, #d4e6f8 76%, #d4e6f8 78%, #14263c 79%, #1a3048 90%, #2a3f56);
  }
  .logo {
    margin-right: 7px;
  }
  h1 {
    flex: 1;
    margin: 0;
    font: 14px/20px "Noto Sans", "Open Sans", sans-serif;
    white-space: nowrap;
  }
  .winbtns {
    display: flex;
    align-self: flex-start;
    height: 24px;
    border: 1px solid #8896a6;
    border-top: 0;
    border-radius: 0 0 5px 5px;
    background: rgba(130, 150, 175, 0.25);
  }
  .winbtns button {
    width: 37px;
  }
  .winbtns button + button {
    border-left: 1px solid #8896a6;
  }
  .winbtns .close {
    width: 62px;
  }

  .menubar {
    display: flex;
    align-items: center;
    gap: 15px;
    height: 28px;
    padding-left: 7px;
    color: #7a7a7a;
    background: linear-gradient(180deg, #fff, #f3f5fb 25%, #d5dcee 40%, #e2e8f6);
    border-bottom: 1px solid #a0a4ac;
  }
  .doc {
    margin-right: -7px;
  }
  .mdi {
    display: flex;
    gap: 2px;
    margin-left: auto;
    padding-right: 2px;
  }
  .mdi button {
    width: 22px;
    height: 26px;
    box-sizing: border-box;
    border: 1px solid #a4b8cc;
    background: linear-gradient(#e6f2fc, #cfe2f4);
  }

  .toolbar {
    display: flex;
    align-items: center;
    height: 31px;
    border-top: 1px solid #fff;
    border-bottom: 1px solid #808080;
    box-sizing: border-box;
  }
  .group {
    display: flex;
    align-items: center;
  }
  .first {
    padding-left: 25px;
  }
  .second {
    padding-left: 17px;
  }
  .third {
    padding-left: 26px;
  }
  .grip {
    width: 2px;
    height: 24px;
    margin-right: 4px;
    background: repeating-linear-gradient(180deg, #a8a8a8 0 2px, transparent 2px 4px);
  }
  .tool {
    width: 23px;
    height: 23px;
  }
  .tool .icon {
    shape-rendering: crispEdges;
  }
  .pressed {
    background: #f8f8f8;
    box-shadow: inset 1px 1px #909090, inset -1px -1px #fff;
  }
  .sep {
    width: 1px;
    height: 22px;
    margin: 0 3px 0 4px;
    background: #909090;
  }
  .combo {
    display: flex;
    width: 136px;
    height: 22px;
    box-sizing: border-box;
    border: 1px solid #c4ccd8;
    background: #fff;
  }
  .combo input {
    flex: 1;
    min-width: 0;
    border: 0;
    padding: 0 0 0 3px;
    background: none;
    font: 14px "Liberation Sans", Arial, sans-serif;
  }
  .combo input::placeholder {
    color: #6e6e6e;
    opacity: 1;
  }
  .combo button {
    width: 20px;
  }
  .go {
    width: 18px;
  }
  .lookup {
    margin-left: 8px;
  }
  .abc {
    font: 12px "Liberation Sans", Arial, sans-serif;
  }

  .chart {
    display: grid;
    grid-template-columns: 79px minmax(0, 1fr) 78px;
    grid-template-rows: 901px 27px;
    padding-top: 1px;
    border-left: 2px solid #808080;
    border-right: 2px solid #d8d8d8;
    background: #000;
  }
  .axis,
  .plot {
    shape-rendering: crispEdges;
  }
  .axis text,
  .times text {
    fill: #fff;
    font: 20px "Liberation Sans", Arial, sans-serif;
  }
  .axis .tag {
    fill: #000;
  }
  .left {
    grid-column: 1;
  }
  .right {
    grid-area: 1 / 3 / 3 / 4;
  }
  .times {
    grid-area: 2 / 2;
  }
  .plots {
    position: relative;
  }
  .plot {
    width: 100%;
    height: 901px;
  }
  .plot * {
    vector-effect: non-scaling-stroke;
  }
  /* study readouts sit on top of the curves */
  .legend {
    position: absolute;
    left: 1px;
    display: flex;
    gap: 10px;
    font: 16px/20px "Liberation Sans", Arial, sans-serif;
    color: #fff;
    white-space: nowrap;
  }
  .price {
    top: 1px;
    gap: 11px;
  }
  .cci {
    top: 469px;
  }
  .dmi {
    top: 685px;
    gap: 9px;
  }
  .near { margin-left: 6px; }
  .apart { margin-left: 10px; }
  .far { margin-left: 30px; }
  .farther { margin-left: 40px; }
  .yellow { color: #ff0; }
  .lime { color: #0f0; }
  .cyan { color: #0ff; }
  .red { color: #f00; }
  .olive { color: #660; }
  .blue { color: #00f; }
  .gray { color: #808080; }
  .dim { color: #404040; }
  .orange { color: #c06000; }
  .purple { color: #800080; }
  .magenta { color: #f0f; }

  .scroll {
    display: flex;
    align-items: center;
    height: 22px;
    padding: 0 4px 0 3px;
    background: #ebebeb;
  }
  .scroll button {
    width: 19px;
    height: 18px;
    box-sizing: border-box;
    border: 1px solid #989898;
    border-radius: 2px;
    background: linear-gradient(90deg, #f4f4f4, #d0d0d0);
  }
  .scroll .thumb {
    margin-right: 3px;
  }
  .track {
    flex: 1;
  }

  .sheets {
    display: flex;
    height: 19px;
    border-bottom: 1px solid #909090;
    font: 12px/16px "Liberation Sans", Arial, sans-serif;
  }
  .nav {
    width: 16px;
    box-sizing: border-box;
    border: 1px solid #a0a0a0;
    background: #f0f0f0;
  }
  .tabs {
    display: flex;
    flex: 1;
    border-top: 1px solid #000;
  }
  .tabs button {
    padding: 0 7px;
    border-bottom: 1px solid #000;
    white-space: nowrap;
  }
  .tabs .active {
    background: #fff;
    font-weight: 700;
    font-size: 11px;
  }
  .slant {
    stroke: #000;
    fill: none;
  }

  .status {
    display: flex;
    align-items: center;
    height: 19px;
    padding: 0 2px;
    background: #f0eeec;
    border-bottom: 2px solid #505860;
    line-height: 18px;
    white-space: nowrap;
  }
  .help {
    flex: 1;
  }
  .cell {
    box-sizing: border-box;
    padding-left: 4px;
    border-left: 1px solid #d4d0cc;
  }
  .on { color: #148014; }
  .w19 { width: 19px; }
  .w48 { width: 52px; border-left: 0; }
  .w60 { width: 60px; }
  .w64 { width: 64px; }
  .w68 { width: 68px; }
  .w83 { width: 84px; }
  .w86 { width: 87px; }
  .w88 { width: 88px; }
  .w90 { width: 90px; }
  .w93 { width: 93px; }
  .w123 { width: 121px; }
</style>
